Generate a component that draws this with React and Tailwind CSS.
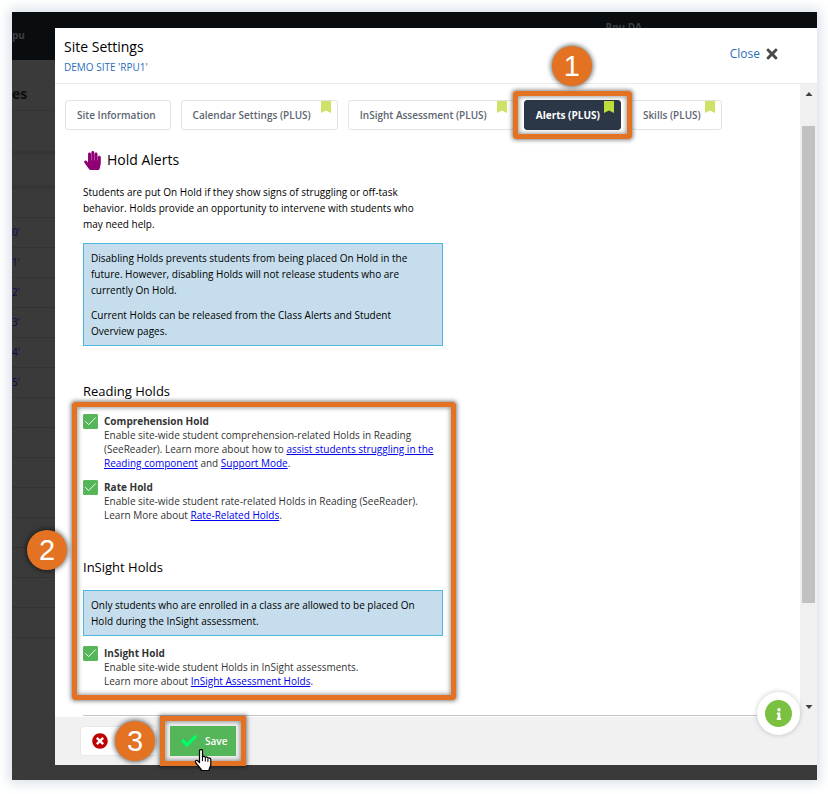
import { useState } from 'react';
import { Check } from 'lucide-react';
import { FaCheck, FaHandPaper, FaInfo, FaTimes, FaTimesCircle } from 'react-icons/fa';

const tabs = [
  { id: 'site', label: 'Site Information', plus: false, padding: 'pr-3.5' },
  { id: 'calendar', label: 'Calendar Settings (PLUS)', plus: true, padding: 'pr-[26px]' },
  { id: 'insight', label: 'InSight Assessment (PLUS)', plus: true, padding: 'pr-[26px]' },
  { id: 'alerts', label: 'Alerts (PLUS)', plus: true, padding: 'pr-5' },
  { id: 'skills', label: 'Skills (PLUS)', plus: true, padding: 'pr-5' },
];

const siteRows = ["0'", "1'", "2'", "3'", "4'", "5'", '', '', '', '', '', '', '', ''];

const Step = ({ number, className }) => (
  <span
    className={`absolute z-20 flex size-10 items-center justify-center rounded-full bg-[#e37222] font-['Liberation_Sans',sans-serif] text-[29px] leading-none text-white shadow-[0_0_5px_1px_rgba(0,0,0,0.6)] ${className}`}
  >
    {number}
  </span>
);

const Highlight = ({ className }) => (
  <span
    className={`pointer-events-none absolute z-10 border-5 border-[#e37222] shadow-[0_0_4px_1px_rgba(0,0,0,0.5),inset_0_0_4px_1px_rgba(0,0,0,0.4)] ${className}`}
  />
);

const Bookmark = ({ active }) => (
  <svg
    className={`absolute top-0 right-1.5 h-3 w-2.5 ${active ? 'text-[#c0dc3c]' : 'text-[#cfe268]'}`}
    viewBox="0 0 10 12"
    fill="currentColor"
  >
    <path d="M0 0h10v12L5 9.500 0 12z" />
  </svg>
);

const Tab = ({ tab, active, onSelect }) => (
  <div className="relative">
    <button
      type="button"
      onClick={() => onSelect(tab.id)}
      className={`relative h-[30px] rounded-[3px] border pl-[11px] text-[10px] whitespace-nowrap ${tab.padding} ${
        active
          ? 'border-[#2b3747] bg-[#2b3747] font-bold text-white'
          : 'border-[#e3e3e3] bg-white font-semibold text-[#5b6570]'
      }`}
    >
      {tab.label}
      {tab.plus && <Bookmark active={active} />}
    </button>
    {tab.id === 'alerts' && (
      <>
        <Highlight className="-inset-x-[11px] -inset-y-[9px] rounded-[3px]" />
        <Step number="1" className="-top-[54px] left-[28px]" />
      </>
    )}
  </div>
);

const Notice = ({ children }) => (
  <div className="w-[360px] max-w-full space-y-[9px] border border-[#4cb8dc] bg-[#c5ddec] px-[7px] py-1.5 leading-4">
    {children}
  </div>
);

const HoldOption = ({ id, title, defaultChecked, children }) => (
  <div className="flex gap-1.5">
    <div className="grid size-[15px] shrink-0">
      <input
        id={id}
        type="checkbox"
        defaultChecked={defaultChecked}
        aria-describedby={`${id}-text`}
        className="peer col-start-1 row-start-1 size-[15px] appearance-none rounded-[1px] border border-[#5cb85c] checked:bg-[#55b559]"
      />
      <Check
        strokeWidth={1.5}
        className="pointer-events-none invisible col-start-1 row-start-1 size-[15px] text-white peer-checked:visible"
      />
    </div>
    <div className="leading-[14px] text-[#333]">
      <label htmlFor={id} className="block font-bold">{title}</label>
      <p id={`${id}-text`}>{children}</p>
    </div>
  </div>
);

const HelpLink = ({ children }) => (
  <a href="#help" className="text-[#0000ee] underline">{children}</a>
);

const Backdrop = () => (
  <div className="absolute inset-0 overflow-hidden bg-[#3a3a3a]" aria-hidden="true">
    <div className="flex h-12 justify-between bg-[#090d10] text-[10px] font-bold text-[#3c3f42]">
      <span className="pt-4">pu</span>
      <span className="pt-2 pr-[175px]">Rpu DA</span>
    </div>
    <h2 className="h-[51px] border-b border-[#343434] pt-6 text-sm leading-5 font-bold text-[#0d0d0d]">es</h2>
    <div className="h-11 border-b-4 border-[#353535]" />
    <div className="h-[34px] border-b-4 border-[#353535]" />
    <div className="h-[29px] border-b border-[#333]" />
    {siteRows.map((row, index) => (
      <div
        key={index}
        className="flex h-[30px] items-center border-b border-[#333] text-[10px] text-[#0b0b4a]"
      >
        {row}
      </div>
    ))}
  </div>
);

const Scrollbar = () => (
  <div className="flex w-[17px] shrink-0 flex-col items-center bg-[#f0f0f0] py-1.5" aria-hidden="true">
    <svg className="size-2" viewBox="0 0 8 8" fill="#404040"><path d="M0.500 6L4 2l3.500 4z" /></svg>
    <div className="grow-[28]" />
    <div className="w-[13px] grow-[477] bg-[#c1c1c1]" />
    <div className="grow-[100]" />
    <svg className="size-2" viewBox="0 0 8 8" fill="#404040"><path d="M0.500 2L4 6l3.500-4z" /></svg>
  </div>
);

const Pointer = () => (
  <svg className="absolute top-[23px] left-6 z-30 h-[23px] w-[19px]" viewBox="0 0 19 23">
    <path
      d="M5.500 1.500c0-1.300 3-1.300 3 0V8c.3-1 2.600-.8 2.800.4.600-.8 2.400-.4 2.600.8.800-.7 2.900-.1 2.900 1.400v5.100c0 1.800-1.800 3.300-1.800 5.800H7.500c0-2-4.200-4.900-5.900-8.100-.9-1.700 1.200-2.700 2.400-1.400l1.500 1.700z"
      fill="white"
      stroke="black"
      strokeWidth="1.200"
      strokeLinejoin="round"
    />
    <path d="M8.500 8v4M11.300 9v3.500M13.900 10v3" stroke="black" fill="none" />
  </svg>
);

const App = () => {
  const [activeTab, setActiveTab] = useState('alerts');

  return (
    <div className="bg-white pt-3 pr-[11px] pb-3.5 pl-3 font-['Open_Sans',sans-serif] text-[10px] text-black">
      <div className="relative flow-root shadow-[0_0_12px_3px_#d8e0ea]">
        <Backdrop />

        <div role="dialog" aria-labelledby="dialog-title" className="relative mt-4 mb-[15px] ml-[43px] bg-white">
          <header className="flex items-start justify-between border-b border-[#ebebeb] pt-2.5 pr-[37px] pb-2 pl-[9px]">
            <div>
              <h1 id="dialog-title" className="text-sm leading-[18px]">Site Settings</h1>
              <p className="pt-1 text-[10px] leading-[15px] text-[#2a6ebb]">DEMO SITE 'RPU1'</p>
            </div>
            <button type="button" className="flex items-center gap-1 pt-2 text-xs leading-4 text-[#2a6ebb]">
              Close
              <FaTimes className="size-4 text-[#4a4a4a]" />
            </button>
          </header>

          <div className="flex">
            <main className="min-w-0 grow">
              <nav className="flex gap-[10px] pt-4 pl-2.5">
                {tabs.map((tab) => (
                  <Tab key={tab.id} tab={tab} active={tab.id === activeTab} onSelect={setActiveTab} />
                ))}
              </nav>

              <div className="pl-7">
                <h2 className="flex items-center gap-[5px] pt-5 text-sm leading-5">
                  <FaHandPaper className="size-[19px] text-[#8e0073]" />
                  Hold Alerts
                </h2>
                <p className="pt-3.5 leading-4">
                  Students are put On Hold if they show signs of struggling or off-task
                  <br />
                  behavior. Holds provide an opportunity to intervene with students who
                  <br />
                  may need help.
                </p>
                <div className="pt-[11px]">
                  <Notice>
                    <p>
                      Disabling Holds prevents students from being placed On Hold in the
                      <br />
                      future. However, disabling Holds will not release students who are
                      <br />
                      currently On Hold.
                    </p>
                    <p>
                      Current Holds can be released from the Class Alerts and Student
                      <br />
                      Overview pages.
                    </p>
                  </Notice>
                </div>

                <h3 className="pt-9 text-[13px] leading-[18px]">Reading Holds</h3>
                <div className="relative mt-3.5 w-[364px]">
                  <Highlight className="-top-3 -right-[9px] -bottom-3 -left-[11px] rounded-[3px]" />
                  <Step number="2" className="top-[116px] -left-14" />
                  <div className="space-y-2.5">
                    <HoldOption id="comprehension" title="Comprehension Hold" defaultChecked>
                      Enable site-wide student comprehension-related Holds in Reading
                      <br />
                      (SeeReader). Learn more about how to <HelpLink>assist students struggling in the
                      <br />
                      Reading component</HelpLink> and <HelpLink>Support Mode</HelpLink>.
                    </HoldOption>
                    <HoldOption id="rate" title="Rate Hold" defaultChecked>
                      Enable site-wide student rate-related Holds in Reading (SeeReader).
                      <br />
                      Learn More about <HelpLink>Rate-Related Holds</HelpLink>.
                    </HoldOption>
                  </div>

                  <h3 className="pt-9 pb-3.5 text-[13px] leading-[18px]">InSight Holds</h3>
                  <Notice>
                    <p>
                      Only students who are enrolled in a class are allowed to be placed On
                      <br />
                      Hold during the InSight assessment.
                    </p>
                  </Notice>
                  <div className="pt-2.5">
                    <HoldOption id="insight-hold" title="InSight Hold" defaultChecked>
                      Enable site-wide student Holds in InSight assessments.
                      <br />
                      Learn more about <HelpLink>InSight Assessment Holds</HelpLink>.
                    </HoldOption>
                  </div>
                </div>
                <hr className="mt-[27px] mb-px border-[#c4c4c4]" />
              </div>
            </main>
            <Scrollbar />
          </div>

          <footer className="relative flex items-center gap-[13px] bg-[#f1f1f1] py-[9px] pl-[25px]">
            <button
              type="button"
              aria-label="Cancel"
              className="flex h-[30px] w-[77px] items-center rounded-[3px] border border-[#e8e8e8] bg-white pl-[11px]"
            >
              <FaTimesCircle className="size-4 text-[#c00000]" />
            </button>
            <Step number="3" className="top-1 left-[60px]" />
            <div className="relative">
              <button
                type="button"
                className="flex h-[30px] w-[66px] items-center gap-2 bg-[#55b559] pl-[11px] font-semibold text-white"
              >
                <FaCheck className="size-4 text-[#00ff66]" />
                Save
              </button>
              <Highlight className="-inset-2.5" />
              <Pointer />
            </div>
            <button
              type="button"
              aria-label="Information"
              className="absolute -top-[25px] right-[17px] flex size-[43px] items-center justify-center rounded-full bg-white shadow-[0_0_4px_1px_rgba(0,0,0,0.15)]"
            >
              <span className="flex size-[27px] items-center justify-center rounded-full bg-[#7ac142]">
                <FaInfo className="size-3 text-white" />
              </span>
            </button>
          </footer>
        </div>
      </div>
    </div>
  );
};

export default App;
